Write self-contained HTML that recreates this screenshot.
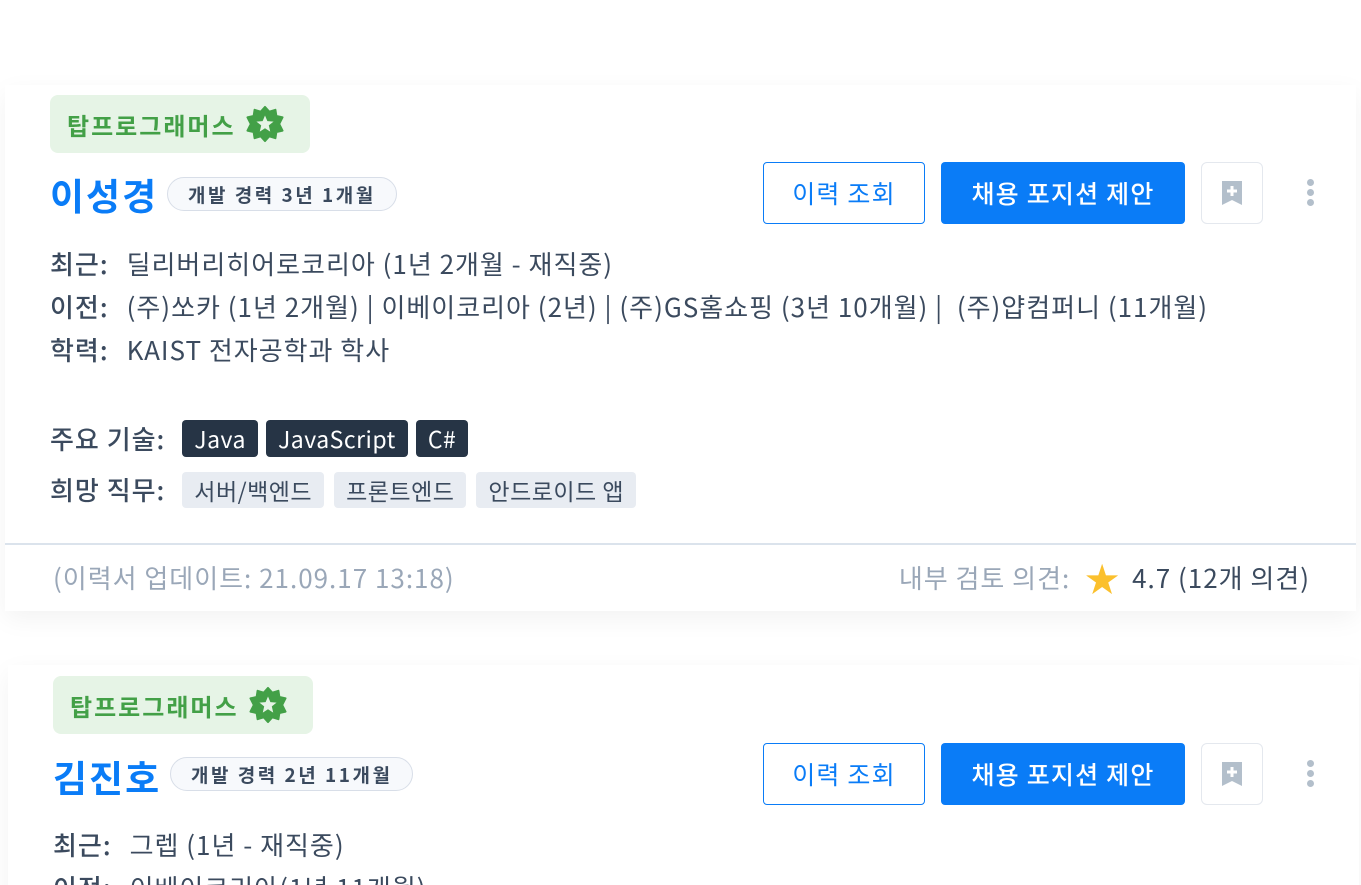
<!DOCTYPE html><html><head><meta charset="utf-8"><style>
*{margin:0;padding:0;box-sizing:border-box}
html,body{width:1361px;height:885px;overflow:hidden}
body{background:#fff;font-family:"Noto Sans CJK KR","Liberation Sans",sans-serif;color:#3b4a5e;position:relative}
.card{position:absolute;left:5px;width:1351px;background:#fff;box-shadow:0 8px 24px rgba(0,0,0,0.05)}
.a{position:absolute;white-space:nowrap}
.badge{background:#e6f4e6;color:#43a047;font-weight:700;font-size:24px;letter-spacing:2px;border-radius:8px;width:260px;height:58px;display:flex;align-items:center;padding-left:17px;gap:10px}
.name{color:#0a7cf7;font-weight:700;font-size:37px;letter-spacing:2px;line-height:50px}
.exp{border:1px solid #d8dee8;background:#f7f9fc;border-radius:17px;height:34px;padding:0 20px;font-size:19px;letter-spacing:2.5px;font-weight:700;color:#3b4a5e;display:flex;align-items:center}
.btn{height:62px;border-radius:4px;display:flex;align-items:center;justify-content:center;font-size:25px;letter-spacing:1.2px}
.b1{border:1px solid #0a7cf7;color:#0a7cf7;width:162px}
.b2{background:#0a7cf7;color:#fff;width:244px;font-weight:500}
.bm{width:62px;border:1px solid #e4e8ee;border-radius:6px}
.line{font-size:26px;letter-spacing:1px;color:#3b4a5e;line-height:34px;display:flex;align-items:center}
.line b{font-weight:500;margin-right:18px}
.chip{display:inline-block;padding:0 12px;height:37px;line-height:37px;border-radius:4px;margin-right:8px;font-size:23px;letter-spacing:0.5px}
.dk{background:#263445;color:#fff}
.lt{background:#e8ecf2;color:#3b4a5e;height:36px;line-height:36px;margin-right:10px}
</style></head><body>
<svg width="0" height="0" style="position:absolute"><defs>
<symbol id="st" viewBox="0 0 40 40"><polygon fill="#43a047" stroke="#43a047" stroke-width="2" stroke-linejoin="round" points="20,2 24.5,7 31,5 32,11.5 38.5,13 35,20 38.5,27 32,28.5 31,35 24.5,33 20,38 15.5,33 9,35 8,28.5 1.5,27 5,20 1.5,13 8,11.5 9,5 15.5,7"/><polygon fill="#e6f4e6" points="20,11 22.5,17 29,17.5 24,21.5 25.5,28 20,24.5 14.5,28 16,21.5 11,17.5 17.5,17"/></symbol>
<symbol id="bk" viewBox="0 0 24 28"><path fill="#b3bfcb" d="M2 2h20v24l-10-5-10 5z"/><path stroke="#fff" stroke-width="3" d="M12 7v10M7 12h10"/></symbol>
</defs></svg>

<div class="card" style="top:85px;height:526px">
<div class="a badge" style="left:45px;top:10px">탑프로그래머스<svg width="38" height="38"><use href="#st"/></svg></div>
<div class="a name" style="left:45px;top:84px">이성경</div>
<div class="a exp" style="left:162px;top:92px">개발 경력 3년 1개월</div>
<div class="a btn b1" style="left:758px;top:77px">이력 조회</div>
<div class="a btn b2" style="left:936px;top:77px">채용 포지션 제안</div>
<div class="a btn bm" style="left:1196px;top:77px"><svg width="24" height="28"><use href="#bk"/></svg></div>
<div class="a" style="left:1302px;top:94px;width:6px"><div style="width:7px;height:7px;border-radius:50%;background:#b3bfcb;margin-bottom:3px"></div><div style="width:7px;height:7px;border-radius:50%;background:#b3bfcb;margin-bottom:3px"></div><div style="width:7px;height:7px;border-radius:50%;background:#b3bfcb"></div></div>
<div class="a line" style="left:45px;top:162px"><b>최근:</b>딜리버리히어로코리아 (1년 2개월 - 재직중)</div>
<div class="a line" style="left:45px;top:205px"><b>이전:</b>(주)쏘카 (1년 2개월) | 이베이코리아 (2년) | (주)GS홈쇼핑 (3년 10개월) |&nbsp; (주)얍컴퍼니 (11개월)</div>
<div class="a line" style="left:45px;top:248px"><b>학력:</b>KAIST 전자공학과 학사</div>
<div class="a line" style="left:45px;top:335px;height:37px"><b style="margin-right:17px">주요 기술:</b><span class="chip dk">Java</span><span class="chip dk">JavaScript</span><span class="chip dk">C#</span></div>
<div class="a line" style="left:45px;top:387px;height:36px"><b style="margin-right:17px">희망 직무:</b><span class="chip lt">서버/백엔드</span><span class="chip lt">프론트엔드</span><span class="chip lt">안드로이드 앱</span></div>
<div class="a" style="left:0;top:458px;width:1351px;height:2px;background:#dbe3ec"></div>
<div class="a line" style="left:48px;top:476px;color:#9aa7b8">(이력서 업데이트: 21.09.17 13:18)</div>
<div class="a line" style="right:46px;top:476px;color:#9aa7b8">내부 검토 의견:&nbsp;<span style="color:#fbc02d;font-size:34px;margin:0 12px 0 8px;line-height:1">★</span><span style="color:#3b4a5e">4.7 (12개 의견)</span></div>
</div>

<div class="card" style="top:665px;height:260px;left:8px">
<div class="a badge" style="left:45px;top:11px">탑프로그래머스<svg width="38" height="38"><use href="#st"/></svg></div>
<div class="a name" style="left:45px;top:86px">김진호</div>
<div class="a exp" style="left:162px;top:92px">개발 경력 2년 11개월</div>
<div class="a btn b1" style="left:755px;top:78px">이력 조회</div>
<div class="a btn b2" style="left:933px;top:78px">채용 포지션 제안</div>
<div class="a btn bm" style="left:1193px;top:78px"><svg width="24" height="28"><use href="#bk"/></svg></div>
<div class="a" style="left:1299px;top:95px"><div style="width:7px;height:7px;border-radius:50%;background:#b3bfcb;margin-bottom:3px"></div><div style="width:7px;height:7px;border-radius:50%;background:#b3bfcb;margin-bottom:3px"></div><div style="width:7px;height:7px;border-radius:50%;background:#b3bfcb"></div></div>
<div class="a line" style="left:45px;top:163px"><b>최근:</b>그렙 (1년 - 재직중)</div>
<div class="a line" style="left:45px;top:206px"><b>이전:</b>이베이코리아(1년 11개월)</div>
</div>
</body></html>
